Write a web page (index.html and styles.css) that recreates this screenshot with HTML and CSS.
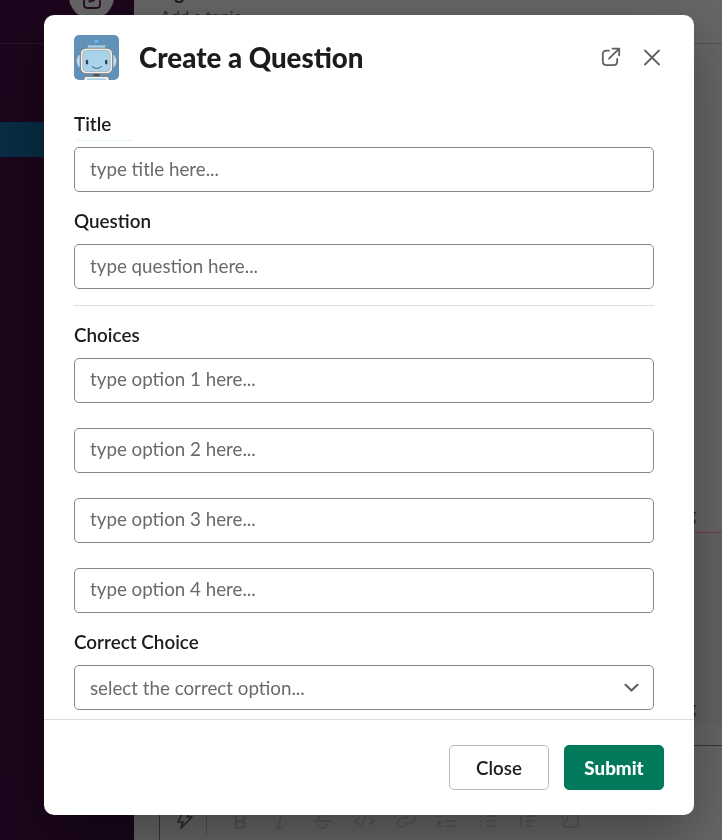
FILE: index.html
```html
<!DOCTYPE html>
<html lang="en">
<head>
<meta charset="utf-8">
<title>Create a Question</title>
<link rel="stylesheet" href="styles.css">
</head>
<body>
<div class="workspace">
  <aside class="sidebar">
    <div class="sidebar-head">
      <span class="compose">
        <svg width="22" height="22" viewBox="0 0 22 22" fill="none" stroke="#240b25" stroke-width="1.8" stroke-linecap="round" stroke-linejoin="round"><path d="M9 3.500H6.500Q3 3.500 3 7V15.500Q3 19 6 19H15.500Q19 19 19 15.500V12"/><path d="M8.500 12.500Q8.500 10 10 8.500L17 1.500L20 4.500L13 11Q11 12.500 8.500 12.500Z"/></svg>
      </span>
    </div>
    <div class="channel-active"></div>
  </aside>
  <main class="main">
    <header class="channel-head">
      <div class="channel-name">algorithms</div>
      <div class="topic">Add a topic</div>
    </header>
    <section class="messages"><span class="clip">g</span></section>
    <section class="messages unread"><span class="clip">g</span></section>
    <section class="composer-wrap">
      <div class="composer">
        <div class="composer-text"></div>
        <div class="toolbar">
          <svg class="bolt" width="18" height="20" viewBox="0 0 18 20"><path d="M7 0H14L11 5H16L5 16L7 10H2Z"/></svg>
          <span class="tool-divider"></span>
          <svg class="tools" width="360" height="20" viewBox="0 0 360 20">
            <path class="heavy" d="M2 3V16H7Q12 15 11 12Q10 9 3 9M7 9Q12 7 10 3"/>
            <path d="M47 3L44 16M42 16H48M80 9H97M93 4Q87 0 84 5L87 9M83 12Q86 18 92 15L94 12M126 5L121 9L126 13M132 3L128 15M135 5L140 9L135 13"/>
            <path d="M172 6L175 3Q180 0 182 4Q183 8 177 11Q174 13 171 10M173 6Q169 4 165 8Q161 13 166 15Q169 16 172 13"/>
            <path d="M211 9H222M211 14H222M204 3V6M203 10Q207 9 206 11L203 14H207M252 4H263M252 9H263M252 14H263M246 4H247M246 9H247M246 14H247M287 2V15M292 4H303M292 9H300M292 14H298M327 4L331 8M335 2L332 10M339 3H344V15H330V10"/>
          </svg>
        </div>
      </div>
    </section>
  </main>
</div>

<div class="overlay">
  <form class="modal">
    <header class="modal-head">
      <svg class="bot" width="45" height="45" viewBox="0 0 45 45">
        <rect width="45" height="45" fill="#6190b8"/>
        <path d="M22.500 8V11" stroke="#526f87" stroke-width="1"/>
        <circle cx="22.500" cy="6.500" r="1.900" fill="#61b7f2"/>
        <rect x="13.500" y="10" width="18" height="5" fill="#a3cfe7" stroke="#6f93ae" stroke-width=".6"/>
        <path d="M7 20H5Q2.500 22 2.500 26Q2.500 30 5 32H7M38 20H40Q42.500 22 42.500 26Q42.500 30 40 32H38" fill="#e5e8ea" stroke="#77838d" stroke-width=".7"/>
        <path d="M4.500 20H8V32H4.500ZM37 20H40.500V32H37Z" fill="#99cbe8"/>
        <rect x="19.500" y="38" width="6" height="4" fill="#4c4c50"/>
        <path d="M10 45V43Q10 41.500 12 41.500H33Q35 41.500 35 43V45" fill="#f2f0ed" stroke="#736f6d" stroke-width=".7"/>
        <path d="M13 45V43.500H32V45Z" fill="#a7d1e7"/>
        <rect x="6.500" y="13.200" width="32" height="25.500" rx="5.500" fill="#f3f1ee" stroke="#77716d" stroke-width=".8"/>
        <rect x="8.800" y="15.300" width="27.400" height="21.200" rx="4" fill="#a8d3ea" stroke="#8b949a" stroke-width=".5"/>
        <ellipse cx="13" cy="27" rx="1.300" ry="2.500" fill="#35454f"/>
        <ellipse cx="32.200" cy="27" rx="1.300" ry="2.500" fill="#35454f"/>
        <path d="M18 31.500Q22.500 35.500 27.500 31.500" fill="none" stroke="#48606f" stroke-width="1" stroke-linecap="round"/>
      </svg>
      <h1>Create a Question</h1>
      <button class="icon-btn" type="button" aria-label="Open in new window">
        <svg width="22" height="22" viewBox="0 0 22 22"><path d="M9 4.600H6.500Q2.800 4.600 2.800 8.300V15.600Q2.800 19.200 6.500 19.200H13.500Q17.200 19.200 17.200 15.600V13"/><path d="M9 12.700L19 2.800M12.500 2.600H19.200V9.300"/></svg>
      </button>
      <button class="icon-btn" type="button" aria-label="Close dialog">
        <svg width="22" height="22" viewBox="0 0 22 22"><path d="M4 4.500L18 18.500M18 4.500L4 18.500"/></svg>
      </button>
    </header>
    <div class="modal-body">
      <section class="field">
        <label class="marked" for="title">Title</label>
        <input id="title" placeholder="type title here...">
      </section>
      <section class="field">
        <label for="question">Question</label>
        <input id="question" placeholder="type question here...">
      </section>
      <hr>
      <section class="field">
        <label for="option1">Choices</label>
        <div class="choices">
          <input id="option1" placeholder="type option 1 here...">
          <input placeholder="type option 2 here...">
          <input placeholder="type option 3 here...">
          <input placeholder="type option 4 here...">
        </div>
      </section>
      <section class="field">
        <label>Correct Choice</label>
        <div class="select">
          <span>select the correct option...</span>
          <svg width="18" height="18" viewBox="0 0 18 18"><path d="M3.500 5.800L9.500 11.500L15.500 5.800"/></svg>
        </div>
      </section>
    </div>
    <footer class="modal-foot">
      <button class="btn" type="button">Close</button>
      <button class="btn primary" type="button">Submit</button>
    </footer>
  </form>
</div>
</body>
</html>
```
FILE: styles.css
```css
* { box-sizing: border-box; }

body {
  margin: 0;
  height: 840px;
  overflow: hidden;
  font-family: Lato, "Liberation Sans", sans-serif;
  font-size: 18.75px;
  color: #1d1c1d;
}

.workspace {
  display: grid;
  grid-template-columns: 134px 1fr;
  height: 840px;
}

.sidebar { background: #1c061d; }

.sidebar-head {
  display: flex;
  justify-content: flex-end;
  height: 44px;
  padding-right: 20px;
  border-bottom: 1px solid #29122a;
}

.compose {
  display: flex;
  align-items: center;
  justify-content: center;
  width: 45px;
  height: 45px;
  margin-top: -26px;
  padding-top: 6px;
  border-radius: 50%;
  background: #686868;
}

.channel-active {
  height: 35px;
  margin-top: 78px;
  background: #082d45;
}

.main {
  display: flex;
  flex-direction: column;
  background: #676767;
}

.channel-head {
  height: 44px;
  padding-left: 26px;
  border-bottom: 1px solid #555;
  overflow: hidden;
}

.channel-name {
  height: 20px;
  margin-top: -17px;
  line-height: 20px;
  font-weight: 900;
}

.topic {
  margin-top: 3px;
  font-size: 16.25px;
  line-height: 20px;
  color: #303030;
}

.messages {
  display: flex;
  align-items: flex-end;
  justify-content: flex-end;
  height: 489px;
  padding: 0 26px 6px 0;
  border-bottom: 1px solid #783b50;
  color: #0a2a44;
}

.messages.unread {
  height: 193px;
  padding-bottom: 7px;
  border-bottom: 0;
  background: #646464;
}

.composer-wrap {
  flex: 1;
  padding: 19px 0 0 25px;
}

.composer {
  height: 100px;
  border: 1px solid #363636;
  border-right: 0;
}

.composer-text { height: 62px; }

.toolbar {
  display: flex;
  align-items: center;
  padding-left: 16px;
}

.bolt {
  fill: none;
  stroke: #2b2b2b;
  stroke-width: 1.600;
  stroke-linejoin: round;
}

.tool-divider {
  width: 1px;
  height: 28px;
  margin: 0 27px 0 12px;
  background: #515151;
}

.tools {
  fill: none;
  stroke: #575757;
  stroke-width: 1.500;
}

.tools .heavy { stroke-width: 2.500; }

.overlay {
  position: fixed;
  inset: 0;
  padding: 15px 28px 25px 44px;
}

.modal {
  display: flex;
  flex-direction: column;
  width: 650px;
  height: 800px;
  border-radius: 10px;
  background: #fff;
  box-shadow: 0 20px 60px rgba(0, 0, 0, .35);
  overflow: hidden;
}

.modal-head {
  display: flex;
  align-items: center;
  height: 85px;
  padding: 0 22px 0 30px;
}

.bot { border-radius: 5px; }

h1 {
  flex: 1;
  margin: 0 0 0 20px;
  font-size: 27.700px;
  font-weight: 900;
  line-height: 38px;
}

.icon-btn {
  display: flex;
  align-items: center;
  justify-content: center;
  width: 41px;
  height: 41px;
  padding: 0 0 1px;
  border: 0;
  background: none;
}

.icon-btn svg {
  fill: none;
  stroke: #616061;
  stroke-width: 1.800;
  stroke-linecap: round;
  stroke-linejoin: round;
}

.modal-body {
  flex: 1;
  display: flex;
  flex-direction: column;
  gap: 16px;
  padding: 11px 40px 0 30px;
  overflow: hidden;
}

.field {
  display: flex;
  flex-direction: column;
}

label {
  height: 36px;
  line-height: 26px;
  font-size: 18.850px;
  font-weight: 600;
}

.marked {
  background: linear-gradient(#e3f3fb, #e3f3fb) 3px 29px / 56px 1px no-repeat;
}

input,
.select {
  width: 100%;
  height: 45px;
  padding: 0 15px 2px;
  border: 1px solid #868686;
  border-radius: 5px;
  background: #fff;
  font: inherit;
  color: #6b6a6b;
}

input::placeholder {
  color: #6b6a6b;
  opacity: 1;
}

.choices {
  display: flex;
  flex-direction: column;
  gap: 25px;
}

.choices input { padding-bottom: 4px; }

.select {
  display: flex;
  align-items: center;
  justify-content: space-between;
  padding: 0 13px 0 15px;
}

.select svg {
  fill: none;
  stroke: #616061;
  stroke-width: 2.200;
  stroke-linecap: round;
  stroke-linejoin: round;
}

hr {
  width: 100%;
  height: 1px;
  margin: 0;
  border: 0;
  background: #ddd;
}

.modal-foot {
  display: flex;
  justify-content: flex-end;
  gap: 15px;
  height: 96px;
  padding: 25px 30px;
  border-top: 1px solid #ddd;
}

.btn {
  width: 100px;
  height: 45px;
  padding: 0;
  border: 1px solid #bbb;
  border-radius: 5px;
  background: #fff;
  font: inherit;
  font-weight: 600;
  color: #1d1c1d;
}

.btn.primary {
  border-color: #007a5a;
  background: #007a5a;
  color: #fff;
  font-weight: 900;
}
```
